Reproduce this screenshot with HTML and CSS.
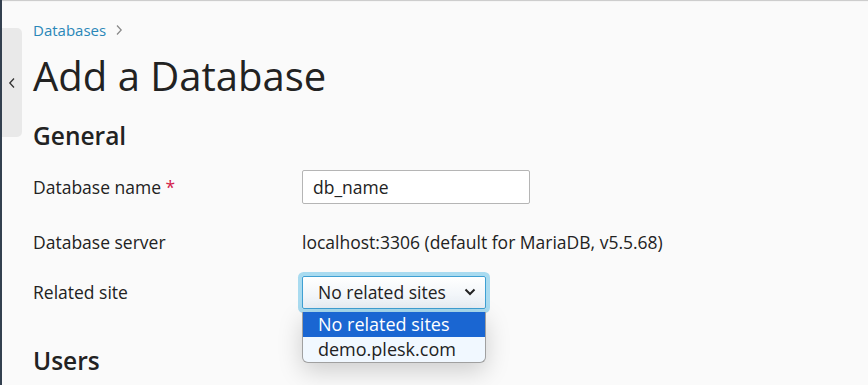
FILE: index.html
```html
<!DOCTYPE html>
<html lang="en">

<head>
    <meta charset="UTF-8">
    <meta name="viewport" content="width=device-width, initial-scale=1.0">
    <title>Add a Database</title>
    <link rel="stylesheet" href="styles.css">
</head>

<body>
    <div class="layout">
        <div class="side-toggle">
            <svg width="8" height="12" viewBox="0 0 8 12"><polyline points="6,1.5 1.8,6 6,10.5" fill="none" stroke="#333" stroke-width="1.3"/></svg>
        </div>

        <div class="page">
            <div class="breadcrumbs">
                <a href="#">Databases</a>
                <span class="crumb-sep">
                    <svg width="8" height="12" viewBox="0 0 8 12"><polyline points="2,1.5 6.2,6 2,10.5" fill="none" stroke="#888" stroke-width="1.2"/></svg>
                </span>
            </div>

            <h1>Add a Database</h1>

            <h2>General</h2>

            <div class="form-row">
                <label for="dbName">Database name <span class="required">*</span></label>
                <input type="text" id="dbName" class="text-input" value="db_name">
            </div>

            <div class="form-row row-static">
                <div class="label">Database server</div>
                <div class="value">localhost:3306 (default for MariaDB, v5.5.68)</div>
            </div>

            <div class="form-row row-select">
                <div class="label">Related site</div>
                <div class="select-wrap">
                    <div class="select">
                        <span>No related sites</span>
                        <svg width="12" height="8" viewBox="0 0 12 8"><polyline points="1.5,1.5 6,6 10.5,1.5" fill="none" stroke="#222" stroke-width="2"/></svg>
                    </div>
                    <ul class="select-list">
                        <li class="selected">No related sites</li>
                        <li>demo.plesk.com</li>
                    </ul>
                </div>
            </div>

            <h2 class="users-title">Users</h2>
        </div>
    </div>
</body>

</html>
```

FILE: styles.css
```css
body {
    margin: 0;
    font-family: "Open Sans", "Noto Sans", sans-serif;
    color: #222;
    background-color: #fafafa;
    border-left: 2px solid #33404f;
    height: 385px;
    box-sizing: border-box;
    overflow: hidden;
    box-shadow: inset 0 2px 1px -1px #c8c8c8;
}

.layout {
    display: flex;
    align-items: flex-start;
}

.side-toggle {
    width: 20px;
    height: 109px;
    margin-top: 28px;
    background: #e9e9e9;
    border-radius: 0 5px 5px 0;
    display: flex;
    align-items: center;
    justify-content: center;
    flex-shrink: 0;
}

.page {
    padding-left: 11px;
    flex: 1;
}

.breadcrumbs {
    margin-top: 20px;
    height: 20px;
    font-size: 15px;
    line-height: 20px;
    display: flex;
    align-items: center;
}

.breadcrumbs a {
    color: #2a87b8;
    text-decoration: none;
}

.crumb-sep {
    display: flex;
    margin-left: 9px;
}

h1 {
    margin: 12px 0 0;
    font-size: 40px;
    font-weight: 400;
    line-height: 48px;
}

h2 {
    margin: 20px 0 0;
    font-size: 24.5px;
    font-weight: 600;
    line-height: 32px;
}

.form-row {
    display: flex;
    align-items: center;
    min-height: 34px;
    font-size: 17.5px;
    margin-top: 18px;
}

.form-row label,
.form-row .label {
    width: 269px;
    flex-shrink: 0;
}

.required {
    color: #d3214b;
}

.text-input {
    width: 228px;
    height: 34px;
    box-sizing: border-box;
    padding: 0 10px;
    border: 1px solid #b5b5b5;
    border-radius: 2px;
    font-family: inherit;
    font-size: 17.5px;
    color: #222;
    background: #fff;
}

.row-static {
    margin-top: 21px;
}

.row-select {
    margin-top: 16px;
}

.select-wrap {
    position: relative;
}

.select {
    width: 184px;
    height: 33px;
    box-sizing: border-box;
    padding: 0 9px 0 15px;
    border: 1px solid #3fa0d3;
    border-radius: 2px;
    background: linear-gradient(#ffffff, #e9eff5);
    box-shadow: 0 0 0 4px #a9dbf0;
    display: flex;
    align-items: center;
    justify-content: space-between;
}

.select-list {
    position: absolute;
    top: 36px;
    left: 0;
    width: 184px;
    box-sizing: border-box;
    margin: 0;
    padding: 0;
    list-style: none;
    border: 1px solid #a0a0a0;
    border-top: none;
    border-radius: 0 0 6px 6px;
    background: #f1f8ff;
    overflow: hidden;
    box-shadow: 0 8px 24px rgba(0, 0, 0, 0.18);
    font-size: 18px;
}

.select-list li {
    height: 25px;
    line-height: 25px;
    padding-left: 15px;
}

.select-list .selected {
    background: #1a66d2;
    color: #fff;
}

.users-title {
    margin-top: 36px;
}
```
